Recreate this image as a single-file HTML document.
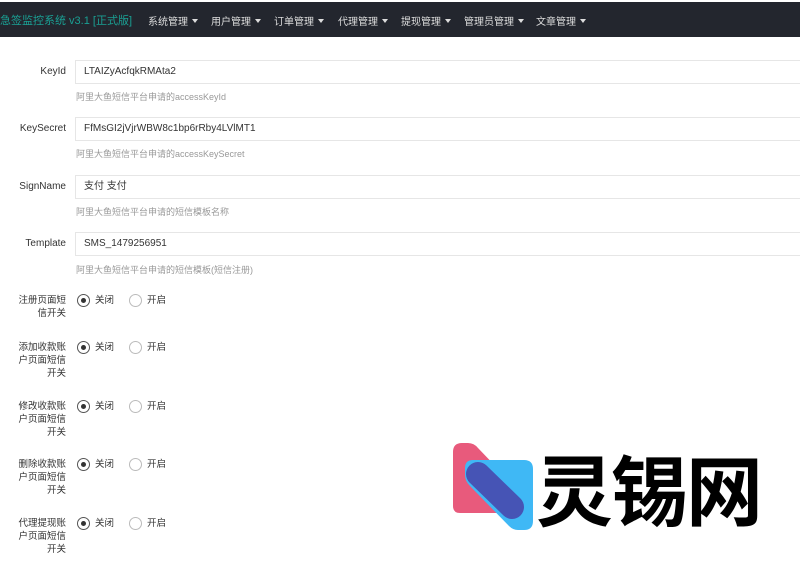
<!DOCTYPE html>
<html><head><meta charset="utf-8"><style>
*{margin:0;padding:0;box-sizing:border-box}
body{width:800px;height:569px;overflow:hidden;background:#fff;font-family:"Liberation Sans","Noto Sans CJK SC",sans-serif;position:relative;color:#333}
.nav{position:absolute;left:0;top:2px;width:800px;height:35px;background:#23262e}
.nav .t{position:absolute;left:0;top:10px;font-size:11px;color:#1aa094}
.nav .m{position:absolute;top:11px;font-size:10px;color:#ddd}
.nav .m:after{content:"";display:inline-block;margin-left:4px;border-left:3.5px solid transparent;border-right:3.5px solid transparent;border-top:4px solid #ddd;vertical-align:2px}
.lab{position:absolute;right:734px;font-size:10px;color:#333;text-align:right}
.inp{position:absolute;left:75px;width:740px;height:24px;border:1px solid #e6e6e6;font-size:10px;line-height:22px;padding:0 0 0 8px;color:#333}
.hint{position:absolute;left:76px;font-size:9px;color:#999}
.rl{position:absolute;right:734px;width:50px;font-size:9.5px;line-height:13px;text-align:right;color:#333}
.r{position:absolute;width:13px;height:13px;border:1px solid #bbb;border-radius:50%}
.r.on{border-color:#555}
.r.on:after{content:"";position:absolute;left:3px;top:3px;width:5px;height:5px;border-radius:50%;background:#333}
.rt{position:absolute;font-size:9.5px;line-height:13px;color:#333}
</style></head><body>
<div class="nav">
<div class="t">急签监控系统 v3.1 [正式版]</div>
<div class="m" style="left:148px">系统管理</div>
<div class="m" style="left:211px">用户管理</div>
<div class="m" style="left:274px">订单管理</div>
<div class="m" style="left:338px">代理管理</div>
<div class="m" style="left:401px">提现管理</div>
<div class="m" style="left:464px">管理员管理</div>
<div class="m" style="left:536px">文章管理</div>
</div>

<div class="lab" style="top:66px">KeyId</div>
<div class="inp" style="top:60px">LTAIZyAcfqkRMAta2</div>
<div class="hint" style="top:90px">阿里大鱼短信平台申请的accessKeyId</div>

<div class="lab" style="top:123px">KeySecret</div>
<div class="inp" style="top:117px">FfMsGI2jVjrWBW8c1bp6rRby4LVlMT1</div>
<div class="hint" style="top:147px">阿里大鱼短信平台申请的accessKeySecret</div>

<div class="lab" style="top:181px">SignName</div>
<div class="inp" style="top:175px">支付 支付</div>
<div class="hint" style="top:205px">阿里大鱼短信平台申请的短信模板名称</div>

<div class="lab" style="top:238px">Template</div>
<div class="inp" style="top:232px">SMS_1479256951</div>
<div class="hint" style="top:263px">阿里大鱼短信平台申请的短信模板(短信注册)</div>

<div class="rl" style="top:294px">注册页面短信开关</div>
<div class="r on" style="left:77px;top:294px"></div><div class="rt" style="left:95px;top:294px">关闭</div>
<div class="r" style="left:129px;top:294px"></div><div class="rt" style="left:147px;top:294px">开启</div>

<div class="rl" style="top:341px">添加收款账户页面短信开关</div>
<div class="r on" style="left:77px;top:341px"></div><div class="rt" style="left:95px;top:341px">关闭</div>
<div class="r" style="left:129px;top:341px"></div><div class="rt" style="left:147px;top:341px">开启</div>

<div class="rl" style="top:400px">修改收款账户页面短信开关</div>
<div class="r on" style="left:77px;top:400px"></div><div class="rt" style="left:95px;top:400px">关闭</div>
<div class="r" style="left:129px;top:400px"></div><div class="rt" style="left:147px;top:400px">开启</div>

<div class="rl" style="top:458px">删除收款账户页面短信开关</div>
<div class="r on" style="left:77px;top:458px"></div><div class="rt" style="left:95px;top:458px">关闭</div>
<div class="r" style="left:129px;top:458px"></div><div class="rt" style="left:147px;top:458px">开启</div>

<div class="rl" style="top:517px">代理提现账户页面短信开关</div>
<div class="r on" style="left:77px;top:517px"></div><div class="rt" style="left:95px;top:517px">关闭</div>
<div class="r" style="left:129px;top:517px"></div><div class="rt" style="left:147px;top:517px">开启</div>

<svg style="position:absolute;left:0;top:0" width="800" height="569">
<path d="M453 452 Q453 443 462 443 L468 443 Q474 443 478 448 L522 494 Q526 500 522 506 L512 513 L460 513 Q453 513 453 506 Z" fill="#e85a7c"/>
<path d="M473 460 L524 460 Q533 460 533 469 L533 521 Q533 530 524 530 L518 530 Q513 530 509 526 L470 486 Q465 481 465 475 L465 468 Q465 460 473 460 Z" fill="#3fb8f5"/>
<line x1="478" y1="474" x2="512" y2="507" stroke="#4654b5" stroke-width="24" stroke-linecap="round"/>
</svg>
<div style="position:absolute;left:536px;top:443px;font-size:77px;line-height:90px;font-weight:bold;color:#000;font-family:'Noto Sans CJK SC',sans-serif;letter-spacing:-2px">灵锡网</div>
</body></html>
